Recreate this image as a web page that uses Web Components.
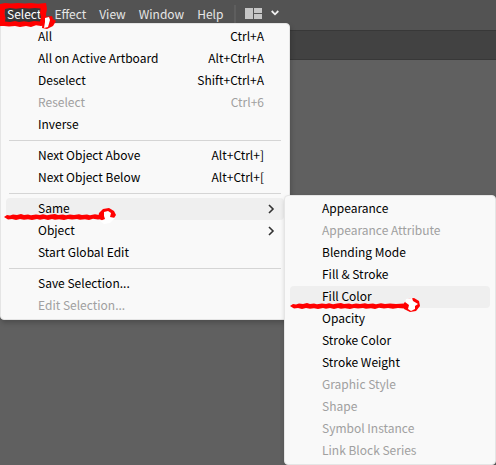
<!DOCTYPE html>
<html lang="en">
<head>
<meta charset="utf-8">
<title>Select menu</title>
<style>
html { height: 100%; }
body { margin: 0; min-height: 100%; background: #606060; font: 12px/22px "Noto Sans CJK KR", "Noto Sans", sans-serif; overflow: hidden; }
</style>
</head>
<body>
<app-window></app-window>
<script>
const define = (name, html, setup) => {
  const template = document.createElement('template');
  template.innerHTML = html;
  customElements.define(name, class extends HTMLElement {
    constructor() {
      super();
      this.attachShadow({ mode: 'open' }).append(template.content.cloneNode(true));
    }
    connectedCallback() { if (setup) setup(this, this.shadowRoot); }
  });
};

define('menu-title', `
<style>
:host { display: block; }
button { font: inherit; line-height: 18px; color: #e6e6e6; background: none; border: 0; border-radius: 2px; padding: 0 2px; margin: 0; display: block; white-space: nowrap; }
:host([open]) button { background: #383838; color: #fff; }
</style>
<button type="button" aria-haspopup="menu"><slot></slot></button>`,
(el, root) => root.querySelector('button').setAttribute('aria-expanded', el.hasAttribute('open')));

define('menu-bar', `
<style>
:host { display: flex; box-sizing: border-box; height: 31px; padding: 5px 5px 0; background: #535353; border-bottom: 1px solid #383838; align-items: flex-start; gap: 9px; }
i { width: 2px; height: 18px; background: #5e5e5e; }
button { border: 0; padding: 0; margin: 2px 0 0; background: none; display: flex; align-items: center; gap: 8px; }
svg { display: block; }
</style>
<slot></slot>
<i></i>
<button type="button" aria-label="Arrange documents">
<svg width="18" height="12" viewBox="0 0 18 12"><path fill="#c6c6c6" d="M0 1h8v11H0zM9 1h8v5H9zM9 7h8v5H9z"/></svg>
<svg width="8" height="6" viewBox="0 0 8 6"><path d="M.7 1 4 4.3 7.3 1" fill="none" stroke="#f0f0f0" stroke-width="1.8"/></svg>
</button>`);

define('document-tabs', `
<style>:host { display: block; height: 28px; background: #424242; border-bottom: 1px solid #383838; }</style>`);

define('menu-panel', `
<style>
:host { display: block; box-sizing: border-box; padding: 2px 5px; background: #f9f9f9; border: 1px solid #e5e5e5; border-radius: 4px; box-shadow: 1px 3px 5px #0003; }
</style>
<slot></slot>`, el => el.setAttribute('role', 'menu'));

define('menu-line', `
<style>:host { display: block; height: 1px; margin: 4px 3px; background: #d5d5d5; }</style>`);

define('menu-item', `
<style>
:host { display: block; position: relative; }
button { box-sizing: border-box; width: 100%; height: 22px; border: 0; border-radius: 4px; margin: 0; padding: 0 20px 2px 32px; background: none; color: #000; font: inherit; display: flex; justify-content: space-between; align-items: center; text-align: left; white-space: nowrap; }
:host([selected]) button { background: #efefef; }
button:disabled { color: #a0a0a0; }
svg { display: none; margin: 2px -11px 0 0; }
:host([arrow]) svg { display: block; }
::slotted(menu-panel) { position: absolute; top: -3px; left: 100%; width: 212px; }
</style>
<button type="button" role="menuitem"><span><slot></slot></span><span class="keys"></span>
<svg width="7" height="10" viewBox="0 0 7 10"><path d="m1 1 4 4-4 4" fill="none" stroke="#333" stroke-width="1.6"/></svg></button>
<slot name="submenu"></slot>`,
(el, root) => {
  root.querySelector('button').disabled = el.hasAttribute('disabled');
  const keys = root.querySelector('.keys');
  if (el.hasAttribute('keys')) keys.textContent = el.getAttribute('keys');
  else keys.remove();
});

define('ink-marks', `
<style>
:host { position: absolute; top: 0; left: 0; pointer-events: none; }
svg { display: block; }
</style>
<svg width="430" height="320" viewBox="0 0 430 320" aria-hidden="true">
<defs><path id="underline" d="M0 3 3 1 6 1.500 9 .5 13 1 17 0 20 1 24 .6 27 1.300 32 .4 36 1 39 .3 43 1.200 47 .6 51 0 54 1 59 .5 62 1.300 66 .4 70 1 75 .2 78 1.100 83 .6 86 1.300 91 .3 95 1 100 .5 106 1 114 .5V5.500L108 5 103 5.800 98 5 94 5.500 89 4.800 85 5.900 81 5.200 76 5.800 73 5 68 5.600 64 5.100 60 6 55 5.200 51 5.700 48 5 44 5.900 40 5.100 36 5.700 33 5 28 6 24 5.200 20 5.800 16 5.100 12 6 8 5 4 5.500z"/></defs>
<g fill="#f00">
<use href="#underline" x="290" y="303"/>
<svg width="102" height="320"><use href="#underline" x="4" y="214"/></svg>
<path fill-rule="evenodd" d="M0 4 5 3 11 3.500 18 3 25 3.600 31 3 38 3.700 46 3 47 9 46 14 46.500 19 46 25 41 26 36 25.300 31 27 26 26 20 27 15 26 9 26.600 4 26 0 26zM5 9 4.500 14 5.500 18 5 21.500 10 22 15 21 19 22 24 21.300 29 22 34 21 40 21.500 41 17 40 13 40.600 8.500 35 8 29 8.600 22 8 16 8.700 10 8z"/>
</g>
<path fill="#f00" d="m43 17 9-1 1 3 3 2-3 5-6 3-5-1z"/>
<path fill="#fff" d="m45 18 4-1 1 3-2 7-4 1 1-6z"/>
<path fill="#f00" d="m99 213 4-4 6-1 5 3 2 4-2 3-5 3-6 0-5-3z"/>
<path fill="#fff" d="m104 212 4-1 3 2-1 4 5 1-5 5-6 1-4-3 5-2-1-3z"/>
<path fill="#f00" d="m404 303 4-4 6-1 5 3 1 5-4 5-6 1-6-3z"/>
<path fill="#fff" d="m406 299 6-1 1 3 5 3-3 2 0 3-4 2-3-2 1-4-4-3z"/>
</svg>`);

define('app-window', `
<style>
:host { display: block; position: relative; }
.main { position: absolute; top: 23px; left: 0; width: 290px; }
</style>
<menu-bar><menu-title open>Select</menu-title><menu-title>Effect</menu-title><menu-title>View</menu-title><menu-title>Window</menu-title><menu-title>Help</menu-title></menu-bar>
<document-tabs></document-tabs>
<menu-panel class="main">
<menu-item keys="Ctrl+A">All</menu-item>
<menu-item keys="Alt+Ctrl+A">All on Active Artboard</menu-item>
<menu-item keys="Shift+Ctrl+A">Deselect</menu-item>
<menu-item keys="Ctrl+6" disabled>Reselect</menu-item>
<menu-item>Inverse</menu-item>
<menu-line></menu-line>
<menu-item keys="Alt+Ctrl+]">Next Object Above</menu-item>
<menu-item keys="Alt+Ctrl+[">Next Object Below</menu-item>
<menu-line></menu-line>
<menu-item arrow selected>Same<menu-panel slot="submenu">
<menu-item>Appearance</menu-item>
<menu-item disabled>Appearance Attribute</menu-item>
<menu-item>Blending Mode</menu-item>
<menu-item>Fill &amp; Stroke</menu-item>
<menu-item selected>Fill Color</menu-item>
<menu-item>Opacity</menu-item>
<menu-item>Stroke Color</menu-item>
<menu-item>Stroke Weight</menu-item>
<menu-item disabled>Graphic Style</menu-item>
<menu-item disabled>Shape</menu-item>
<menu-item disabled>Symbol Instance</menu-item>
<menu-item disabled>Link Block Series</menu-item>
</menu-panel></menu-item>
<menu-item arrow>Object</menu-item>
<menu-item>Start Global Edit</menu-item>
<menu-line></menu-line>
<menu-item>Save Selection...</menu-item>
<menu-item disabled>Edit Selection...</menu-item>
</menu-panel>
<ink-marks></ink-marks>`);
</script>
</body>
</html>
